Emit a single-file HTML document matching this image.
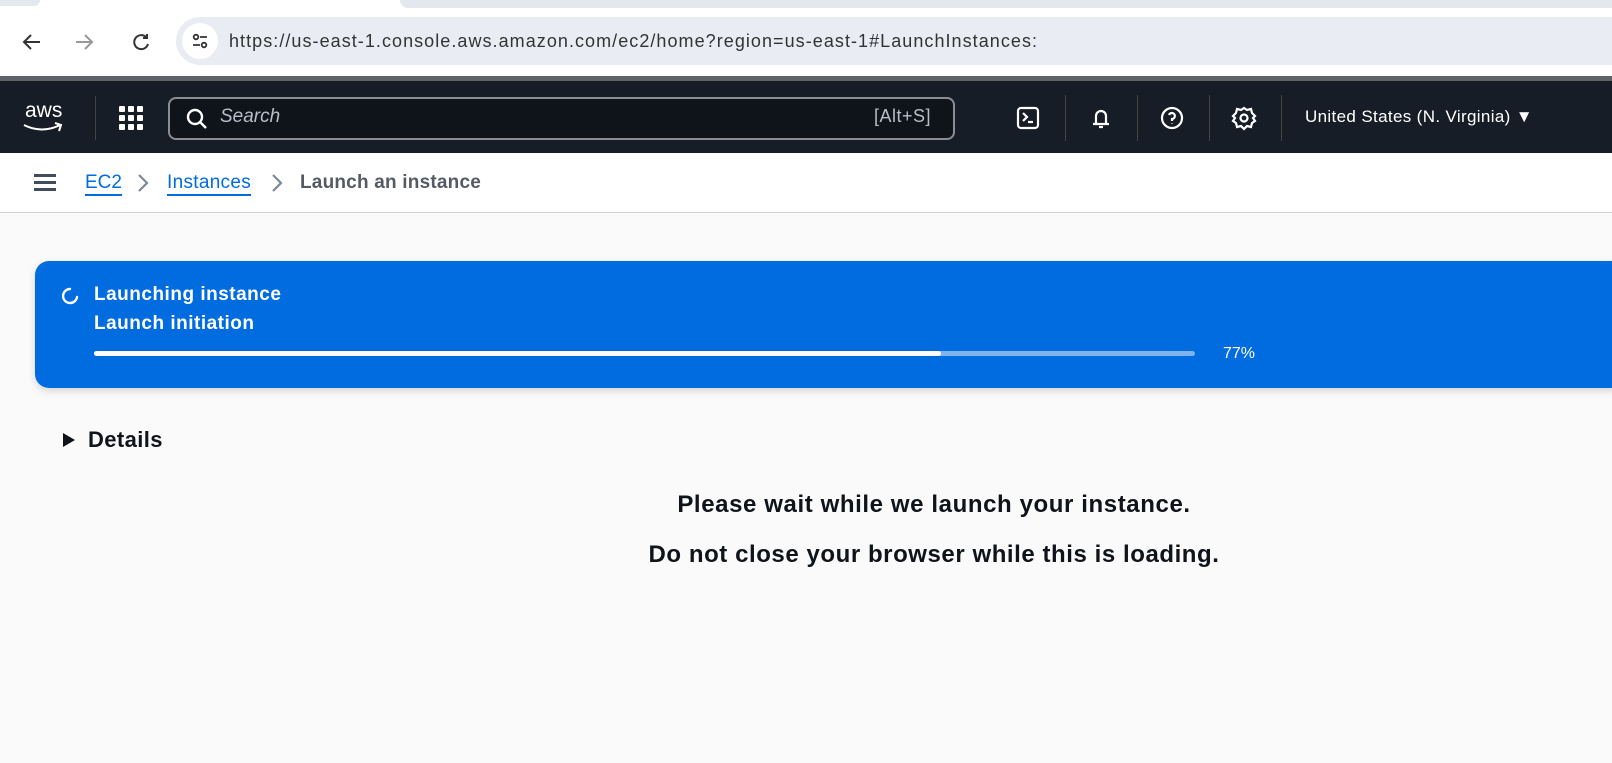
<!DOCTYPE html>
<html><head><style>
*{margin:0;padding:0;box-sizing:border-box}
body{width:1612px;height:763px;overflow:hidden;background:#fafafa;font-family:"Liberation Sans",sans-serif;position:relative}
.a{position:absolute}
</style></head><body>
<div class="a" style="left:0;top:0;width:1612px;height:77px;background:#fff"></div>
<div class="a" style="left:0;top:0;width:40px;height:6px;background:#e3e8ef;border-bottom-right-radius:8px"></div>
<div class="a" style="left:400px;top:0;width:1212px;height:8px;background:#e3e8ef;border-bottom-left-radius:8px"></div>
<svg class="a" style="left:20px;top:30px" width="140" height="24" viewBox="0 0 140 24" fill="none" stroke-width="2">
<path d="M20 12H4M11 5L4 12L11 19" stroke="#333"/>
<path d="M56 12H72M65 5L72 12L65 19" stroke="#999"/>
<path d="M126 7A7 7 0 1 0 128 14M127 4V8H123" stroke="#333"/>
</svg>
<div class="a" style="left:176px;top:17px;width:1436px;height:48px;background:#e9edf3;border-radius:24px 0 0 24px"></div>
<div class="a" style="left:182px;top:23px;width:36px;height:36px;background:#fff;border-radius:18px"></div>
<svg class="a" style="left:190px;top:31px" width="20" height="20" viewBox="0 0 20 20" fill="none" stroke="#333" stroke-width="1.8"><circle cx="6" cy="6" r="2.3"/><path d="M10 6H17M3 14H10"/><circle cx="14" cy="14" r="2.3"/></svg>
<div class="a" style="left:229px;top:31px;font-size:18px;color:#333;letter-spacing:1.05px">https://us-east-1.console.aws.amazon.com/ec2/home?region=us-east-1#LaunchInstances:</div>
<div class="a" style="left:0;top:76px;width:1612px;height:5px;background:#5f6368"></div>
<div class="a" style="left:0;top:81px;width:1612px;height:72px;background:#161d26"></div>
<div class="a" style="left:25px;top:99px;color:#fff;font-size:21px">aws</div>
<svg class="a" style="left:22px;top:122px" width="44" height="14"><path d="M2 3Q20 12 38 3M33 1L39 3L37 9" stroke="#fff" stroke-width="2" fill="none"/></svg>
<div class="a" style="left:95px;top:96px;width:1px;height:44px;background:#444"></div>
<svg class="a" style="left:119px;top:106px" width="24" height="24" fill="#fff"><rect x="0" y="0" width="6" height="6" rx="1"/><rect x="9" y="0" width="6" height="6" rx="1"/><rect x="18" y="0" width="6" height="6" rx="1"/><rect x="0" y="9" width="6" height="6" rx="1"/><rect x="9" y="9" width="6" height="6" rx="1"/><rect x="18" y="9" width="6" height="6" rx="1"/><rect x="0" y="18" width="6" height="6" rx="1"/><rect x="9" y="18" width="6" height="6" rx="1"/><rect x="18" y="18" width="6" height="6" rx="1"/></svg>
<div class="a" style="left:168px;top:97px;width:787px;height:43px;border:2px solid #8c8c94;border-radius:8px;background:#0f141a"></div>
<svg class="a" style="left:185px;top:107px" width="24" height="24" fill="none" stroke="#fff" stroke-width="2.4"><circle cx="10" cy="10" r="7"/><path d="M15 15L21 21"/></svg>
<div class="a" style="left:220px;top:106px;color:#b6bec9;font-style:italic;font-size:19px">Search</div>
<div class="a" style="left:874px;top:106px;color:#b6bec9;font-size:18px;letter-spacing:0.5px">[Alt+S]</div>
<svg class="a" style="left:1014px;top:104px" width="250" height="28" fill="none" stroke="#fff" stroke-width="2.2">
<rect x="4" y="4" width="20" height="20" rx="3"/><path d="M9 9L13 13L9 17M14 18H19"/>
<path d="M79 20H95M82 20V12A5 5 0 0 1 92 12V20M85 23H89"/>
<circle cx="158" cy="14" r="10"/><path d="M155 11A3 3 0 1 1 158 15V17M158 19.5V20"/>
<circle cx="230" cy="14" r="3.5"/><path d="M230 4L233 6L237 5L238 9L241 12L239 14L241 17L238 19L237 23L233 22L230 25L227 22L223 23L222 19L219 17L221 14L219 12L222 9L223 5L227 6Z"/>
</svg>
<div class="a" style="left:1065px;top:95px;width:1px;height:46px;background:#444"></div>
<div class="a" style="left:1137px;top:95px;width:1px;height:46px;background:#444"></div>
<div class="a" style="left:1209px;top:95px;width:1px;height:46px;background:#444"></div>
<div class="a" style="left:1281px;top:95px;width:1px;height:46px;background:#444"></div>
<div class="a" style="left:1305px;top:107px;color:#fff;font-size:17px;letter-spacing:0.35px">United States (N. Virginia) ▼</div>
<div class="a" style="left:0;top:153px;width:1612px;height:60px;background:#fff;border-bottom:1px solid #d0d4da"></div>
<svg class="a" style="left:34px;top:173px" width="24" height="20" fill="#414d5c"><rect y="1" width="22" height="3"/><rect y="8" width="22" height="3"/><rect y="15" width="22" height="3"/></svg>
<div class="a" style="left:85px;top:172px;font-size:19px;color:#006ce0;border-bottom:2px solid #006ce0;line-height:22px">EC2</div>
<svg class="a" style="left:134px;top:173px" width="20" height="20" fill="none" stroke="#7d8998" stroke-width="2.2"><path d="M5 2L13 10L5 18"/></svg>
<div class="a" style="left:167px;top:172px;font-size:19px;color:#006ce0;border-bottom:2px solid #006ce0;line-height:22px;letter-spacing:0.3px">Instances</div>
<svg class="a" style="left:268px;top:173px" width="20" height="20" fill="none" stroke="#7d8998" stroke-width="2.2"><path d="M5 2L13 10L5 18"/></svg>
<div class="a" style="left:300px;top:172px;font-size:19px;color:#545b64;font-weight:bold;line-height:22px;letter-spacing:0.2px">Launch an instance</div>
<div class="a" style="left:35px;top:261px;width:1590px;height:127px;background:#006ce0;border-radius:14px;box-shadow:0 3px 8px rgba(0,0,0,.15)"></div>
<svg class="a" style="left:60px;top:286px" width="20" height="20" fill="none" stroke="#fff" stroke-width="2.4" stroke-linecap="round"><path d="M10 3A7 7 0 1 0 17 11"/></svg>
<div class="a" style="left:94px;top:284px;color:#fff;font-weight:bold;font-size:19px;letter-spacing:0.5px">Launching instance</div>
<div class="a" style="left:94px;top:313px;color:#fff;font-weight:bold;font-size:19px;letter-spacing:0.5px">Launch initiation</div>
<div class="a" style="left:94px;top:351px;width:1101px;height:5px;background:#7fb4ee;border-radius:3px"></div>
<div class="a" style="left:94px;top:351px;width:847px;height:5px;background:#fff;border-radius:3px"></div>
<div class="a" style="left:1223px;top:345px;color:#fff;font-size:16px">77%</div>
<svg class="a" style="left:62px;top:432px" width="14" height="16" fill="#0f141a"><path d="M1 1L13 8L1 15Z"/></svg>
<div class="a" style="left:88px;top:427px;color:#0f141a;font-weight:bold;font-size:22px;letter-spacing:0.4px">Details</div>
<div class="a" style="left:0;top:491px;width:1868px;text-align:center;color:#0f141a;font-weight:bold;font-size:24px;letter-spacing:0.6px">Please wait while we launch your instance.</div>
<div class="a" style="left:0;top:541px;width:1868px;text-align:center;color:#0f141a;font-weight:bold;font-size:24px;letter-spacing:0.56px">Do not close your browser while this is loading.</div>
</body></html>
